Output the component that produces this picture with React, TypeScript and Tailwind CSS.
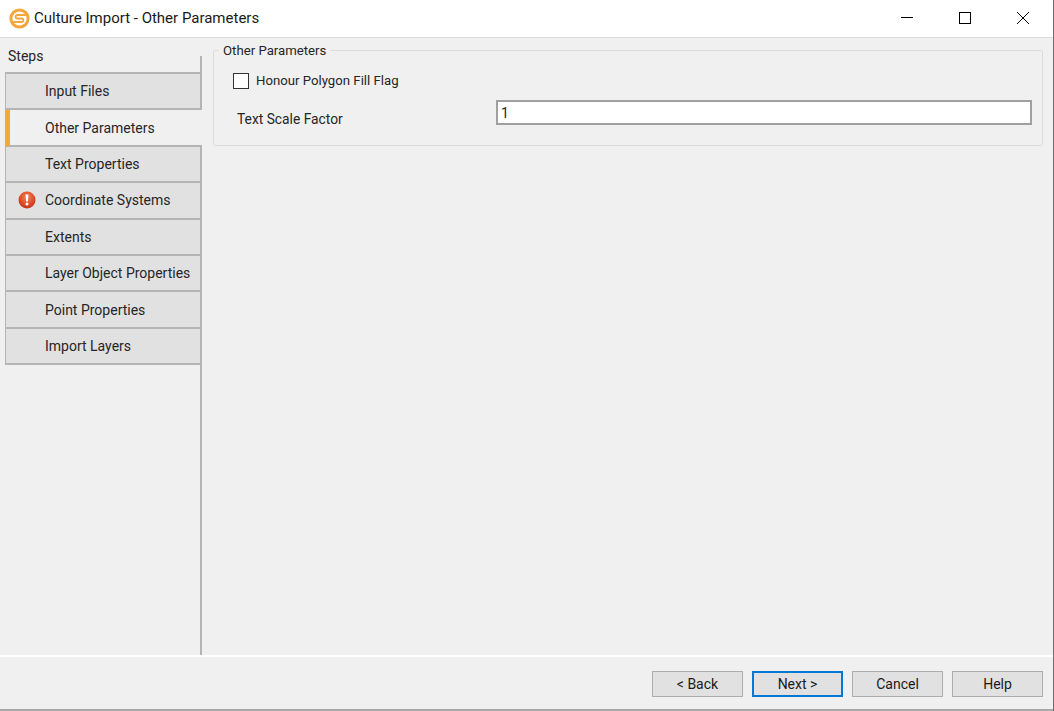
const steps = [
	"Input Files",
	"Other Parameters",
	"Text Properties",
	"Coordinate Systems",
	"Extents",
	"Layer Object Properties",
	"Point Properties",
	"Import Layers",
];

function Logo() {
	return (
		<svg width="21" height="21" viewBox="0 0 21 21" fill="none" className="shrink-0">
			<circle cx="10.5" cy="10.5" r="8.6" stroke="#f5a73b" strokeWidth="3" />
			<path
				d="M17 7H8.5C6 7 6 10.5 8.5 10.5H12.5C15 10.5 15 14 12.5 14H4"
				stroke="#f5a73b"
				strokeWidth="1.8"
			/>
		</svg>
	);
}

function ErrorIcon() {
	return (
		<svg width="18" height="18" viewBox="0 0 18 18" className="absolute left-[12px] top-[8px]">
			<defs>
				<radialGradient id="err" cx="50%" cy="35%" r="70%">
					<stop offset="0%" stopColor="#f58a5c" />
					<stop offset="60%" stopColor="#de4a26" />
					<stop offset="100%" stopColor="#b93312" />
				</radialGradient>
			</defs>
			<circle cx="9" cy="9" r="8.5" fill="url(#err)" />
			<path d="M7.6 3.5H10.4L9.9 10.5H8.1Z" fill="#fff" />
			<circle cx="9" cy="13" r="1.5" fill="#fff" />
		</svg>
	);
}

function FooterButton({ label, primary }: { label: string; primary?: boolean }) {
	return (
		<button
			type="button"
			className={
				primary
					? "w-[91px] h-[26px] bg-[#e1e1e1] border-2 border-[#0078d7] text-[#1a1a1a]"
					: "w-[91px] h-[26px] bg-[#e1e1e1] border border-[#adadad] text-[#1a1a1a]"
			}
		>
			{label}
		</button>
	);
}

export default function App() {
	return (
		<div className="w-[1054px] h-[711px] flex flex-col bg-[#f0f0f0] text-[14px] leading-[18px] text-[#262626] font-['Roboto',sans-serif] overflow-hidden border-r border-[#6e6e6e]">
			{/* title bar */}
			<div className="h-[38px] shrink-0 bg-white border-b border-[#dcdcdc] flex items-center pl-[9px]">
				<Logo />
				<span className="ml-[4px] -mt-[1px] text-[15px] text-[#1a1a1a]">Culture Import - Other Parameters</span>
				<div className="ml-auto flex items-center gap-[46px] pr-[24px] -mt-[1px]">
					<svg width="12" height="12" viewBox="0 0 12 12" fill="none" stroke="#000">
						<path d="M0 5.5H12" />
					</svg>
					<svg width="12" height="12" viewBox="0 0 12 12" fill="none" stroke="#000">
						<rect x="0.5" y="0.5" width="11" height="11" />
					</svg>
					<svg width="12" height="12" viewBox="0 0 12 12" fill="none" stroke="#000">
						<path d="M0 0L12 12M12 0L0 12" />
					</svg>
				</div>
			</div>

			<div className="flex-1 flex min-h-0">
				{/* steps */}
				<div className="w-[202px] shrink-0 pl-[5px] pt-[18px] flex flex-col">
					<div className="flex-1 border-r-2 border-[#b4b4b4] flex flex-col">
						<div className="pl-[3px] h-[17px] -mt-[9px] mb-[8px]">Steps</div>
						<div className="border-t-2 border-[#b4b4b4] flex flex-col">
							{steps.map((s) =>
								s === "Other Parameters" ? (
									<div
										key={s}
										className="h-[36.4px] shrink-0 -mr-[2px] bg-[#f0f0f0] border-l-[5px] border-l-[#f5a73b] border-b-2 border-b-[#b4b4b4] pl-[35px] flex items-center"
									>
										{s}
									</div>
								) : (
									<div
										key={s}
										className="relative h-[36.4px] shrink-0 bg-[#e1e1e1] border-l border-b-2 border-[#b4b4b4] pl-[39px] flex items-center whitespace-nowrap"
									>
										{s === "Coordinate Systems" && <ErrorIcon />}
										{s}
									</div>
								),
							)}
						</div>
					</div>
				</div>

				{/* content */}
				<div className="flex-1 pl-[11px] pr-[10px] pt-[3px]">
					<fieldset className="h-[105px] border border-[#dcdcdc] rounded-[2px] pl-[19px] pr-[10px]">
						<legend className="-ml-[14px] px-[4px] relative top-[1px] text-[13.2px]">Other Parameters</legend>
						<label className="flex items-center gap-[7px] mt-[13px] h-[18px] text-[13.2px]">
							<span className="w-[16px] h-[16px] bg-white border border-[#333333] shrink-0" />
							Honour Polygon Fill Flag
						</label>
						<div className="flex items-start mt-[10px]">
							<span className="w-[263px] shrink-0 pl-[4px] pt-[10px] text-[13.8px]">Text Scale Factor</span>
							<input
								type="text"
								defaultValue="1"
								className="w-[536px] h-[25px] bg-white border-2 border-[#a0a0a0] px-[3px] outline-none text-[#262626]"
							/>
						</div>
					</fieldset>
				</div>
			</div>

			{/* footer */}
			<div className="h-[56px] shrink-0 border-t-2 border-white border-b-2 border-b-[#a8a8a8] flex items-start justify-end gap-[9px] pt-[14px] pr-[10px]">
				<FooterButton label="< Back" />
				<FooterButton label="Next >" primary />
				<FooterButton label="Cancel" />
				<FooterButton label="Help" />
			</div>
		</div>
	);
}
